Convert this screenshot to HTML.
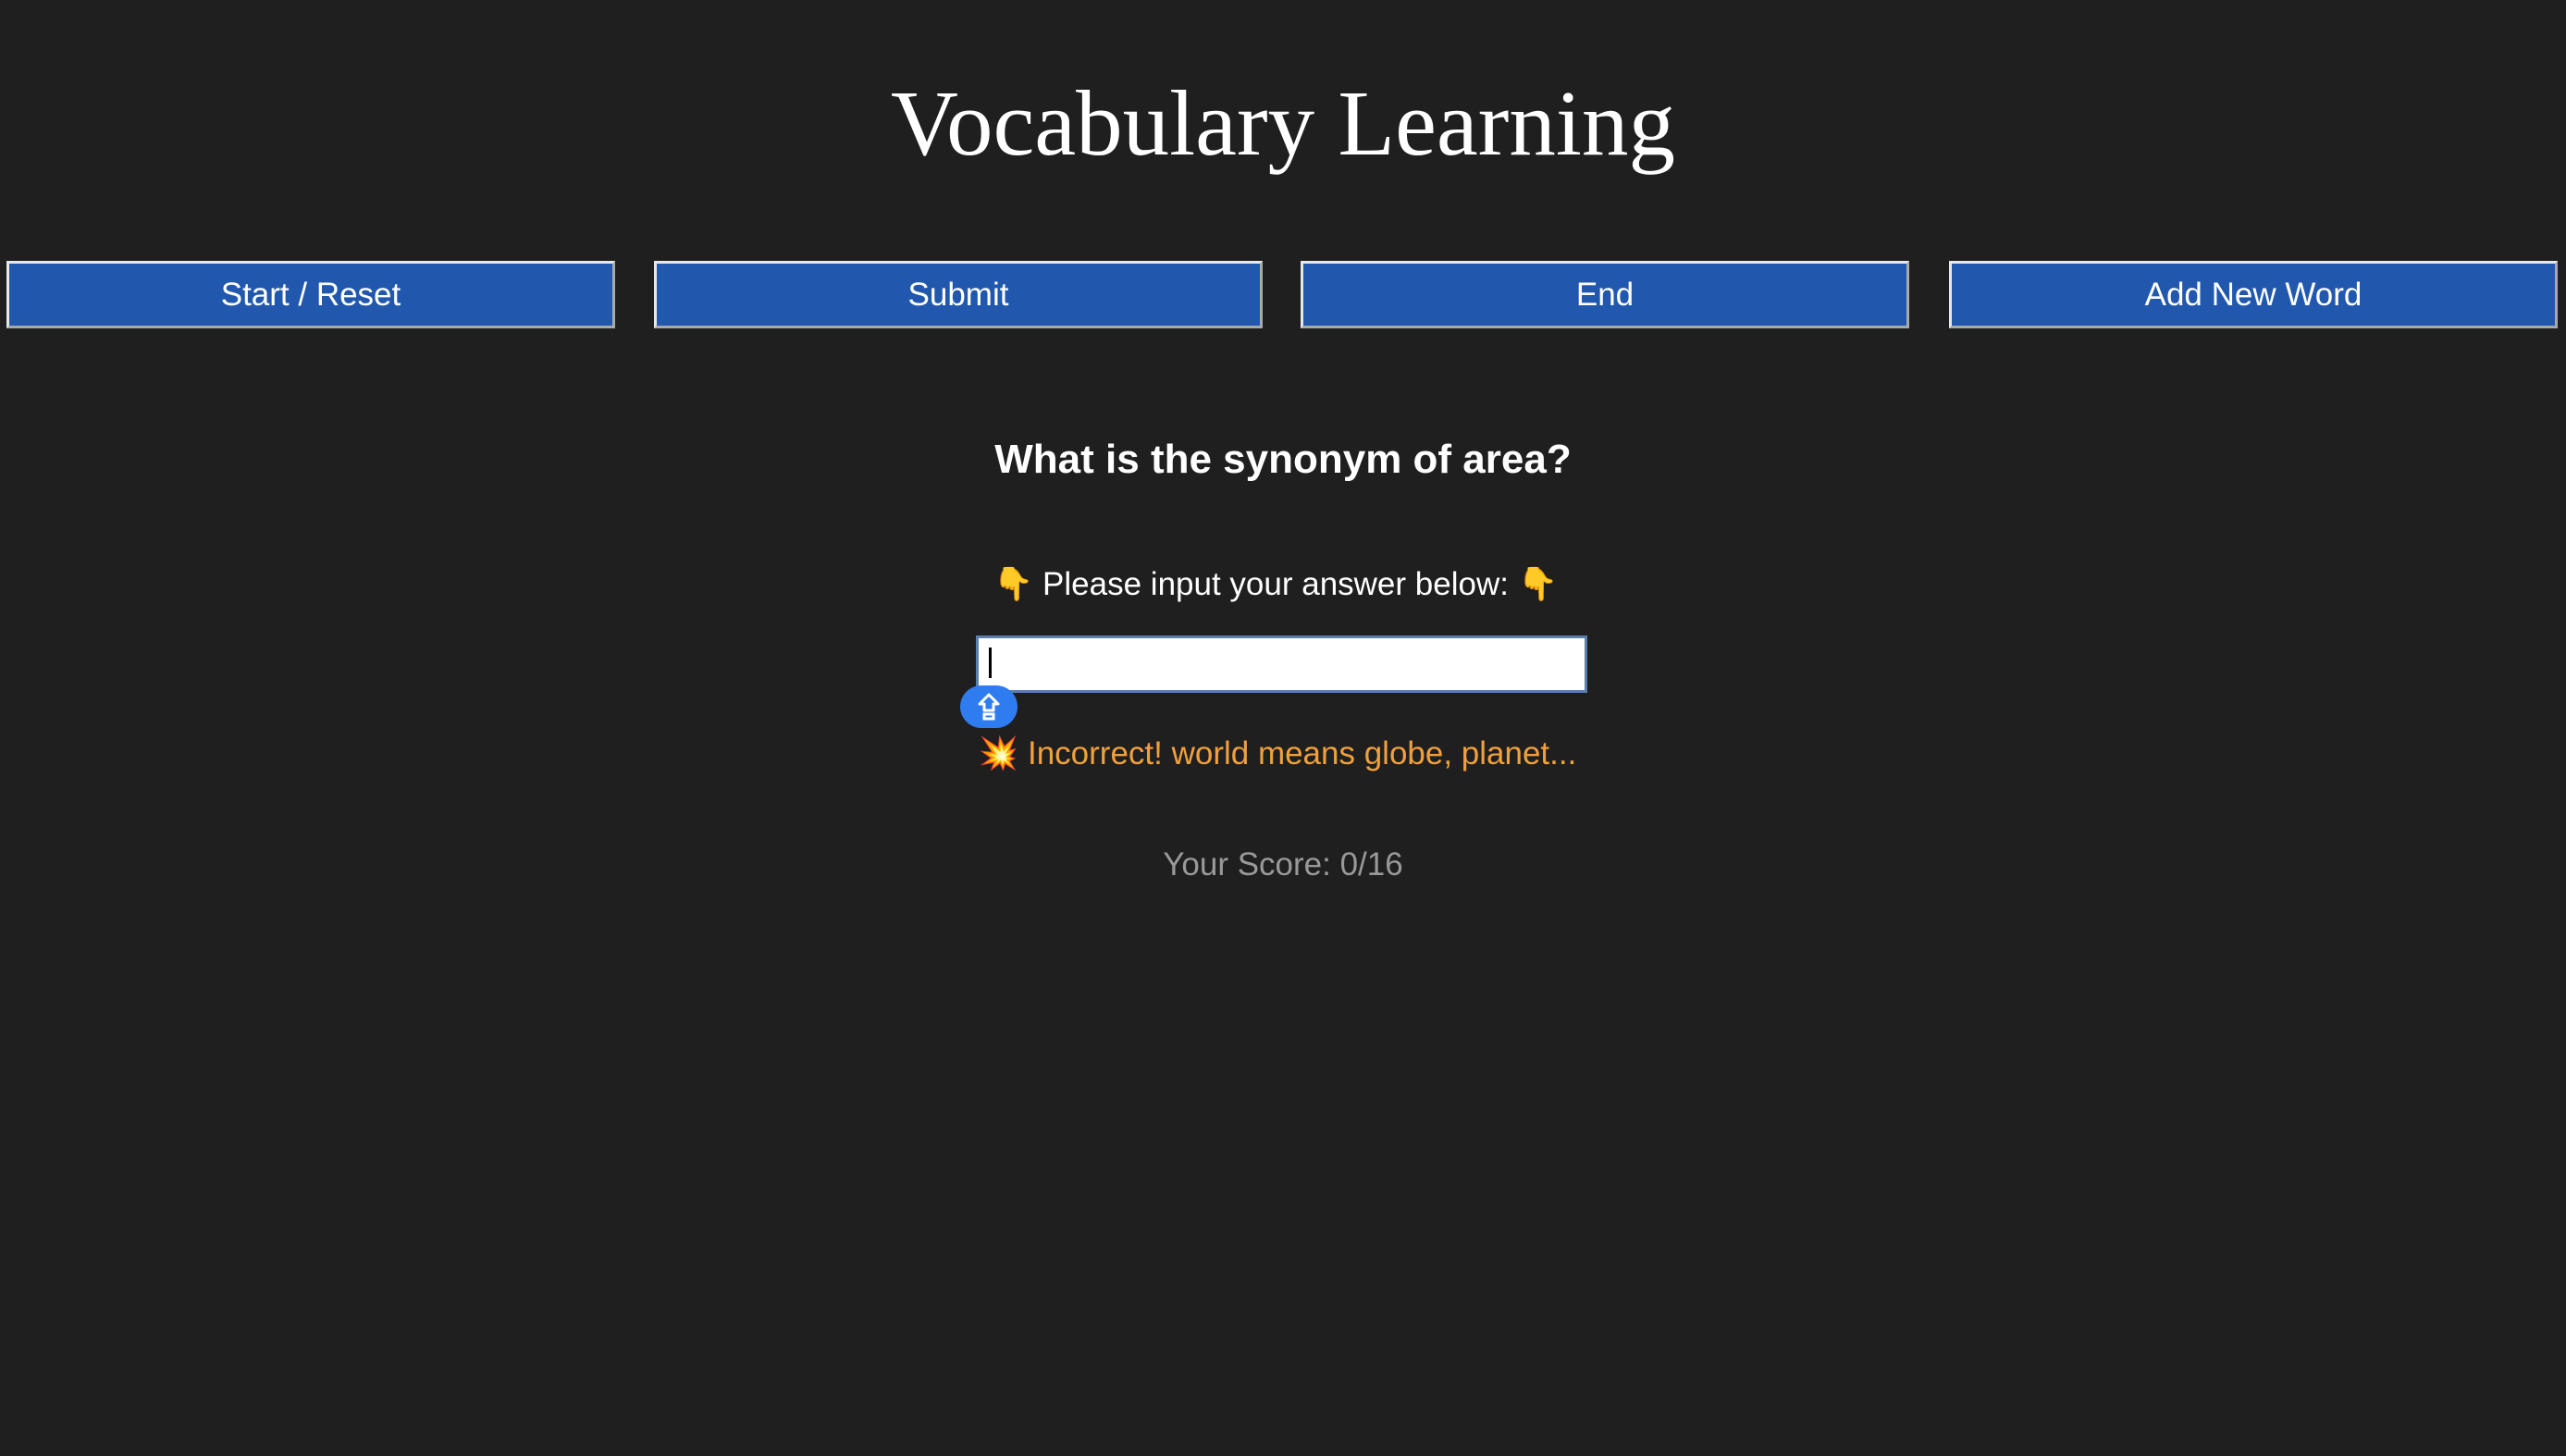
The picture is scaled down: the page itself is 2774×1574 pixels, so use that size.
<!DOCTYPE html>
<html><head><meta charset="utf-8"><style>
html,body{margin:0;padding:0;width:2774px;height:1574px;background:#1f1f1f;overflow:hidden;font-family:"Liberation Sans",sans-serif;color:#fff}
.abs{position:absolute}
h1{position:absolute;left:0;width:2774px;top:63px;margin:0;text-align:center;font-family:"Liberation Serif",serif;font-weight:normal;font-size:101px;line-height:140px}
.btn{position:absolute;top:282px;width:652px;height:67px;background:#2158ad;border:3px solid #a9a9a9;border-top-color:#e8e8e8;border-left-color:#e8e8e8;color:#fff;font-size:35px;line-height:67px;text-align:center}
.c{position:absolute;left:0;width:2774px;text-align:center}
</style></head><body>
<h1>Vocabulary Learning</h1>
<div class="btn" style="left:7px">Start / Reset</div>
<div class="btn" style="left:707px">Submit</div>
<div class="btn" style="left:1406px">End</div>
<div class="btn" style="left:2107px">Add New Word</div>
<div class="c" style="top:471px;font-size:44px;font-weight:bold;line-height:52px">What is the synonym of area?</div>
<div class="c" style="top:610px;font-size:35px;line-height:44px;left:-8px"><span style="color:#f3b23a">👇</span> Please input your answer below: <span style="color:#f3b23a">👇</span></div>
<div class="abs" style="left:1055px;top:687px;width:655px;height:56px;background:#fff;border:3px solid #5b80ad"></div>
<div class="abs" style="left:1069px;top:700px;width:3px;height:33px;background:#000"></div>
<div class="abs" style="left:1038px;top:741px;width:62px;height:46px;border-radius:23px;background:#2f7cf0">
<svg width="62" height="46" viewBox="0 0 62 46"><path d="M31 10 L41 20 H36 V27 H26 V20 H21 Z" fill="none" stroke="#fff" stroke-width="3" stroke-linejoin="round"/><rect x="26" y="31" width="10" height="5" fill="none" stroke="#fff" stroke-width="3"/></svg></div>
<div class="c" style="top:793px;font-size:35px;line-height:44px;color:#f0a03c;left:-6px"><span style="color:#e04020">💥</span> Incorrect! world means globe, planet...</div>
<div class="c" style="top:913px;font-size:35px;line-height:44px;color:#999">Your Score: 0/16</div>
</body></html>
